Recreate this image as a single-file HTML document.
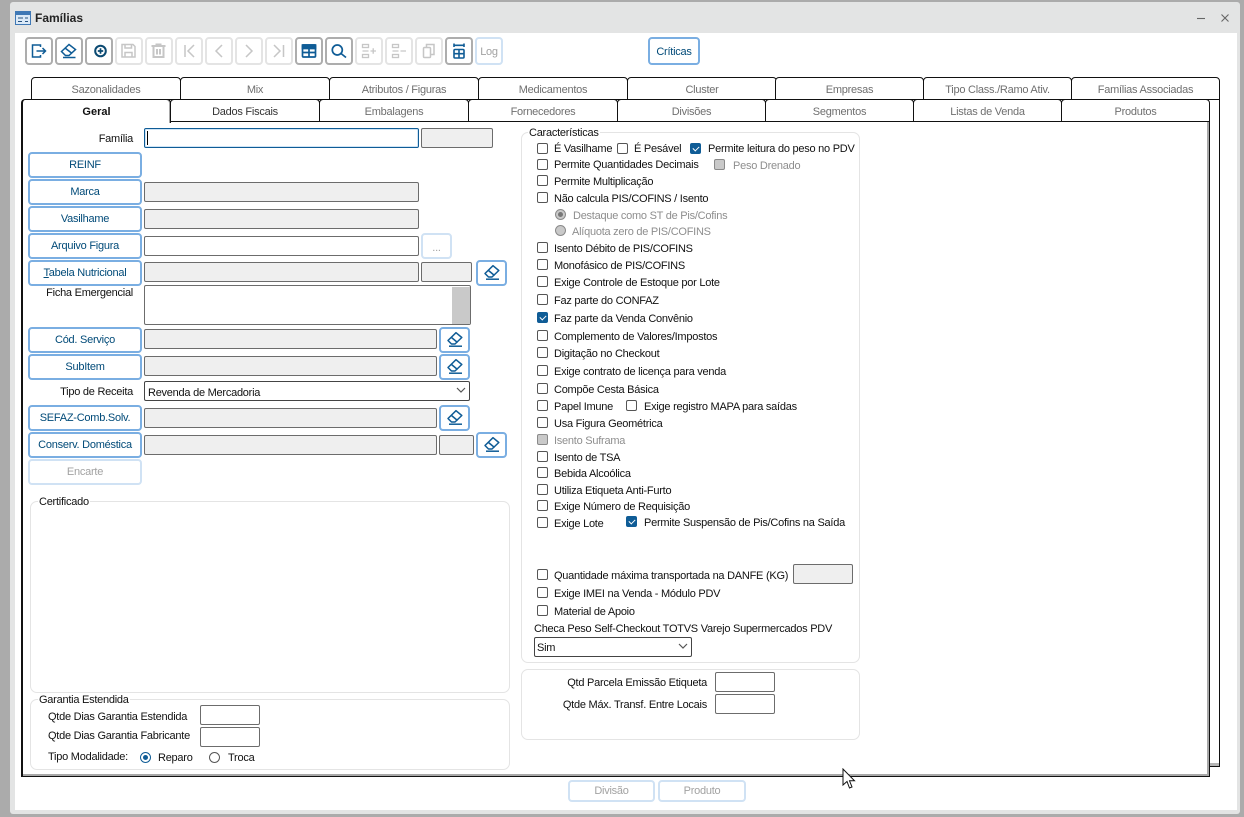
<!DOCTYPE html>
<html lang="pt"><head><meta charset="utf-8"><title>Famílias</title>
<style>
html,body{margin:0;padding:0}
body{width:1244px;height:817px;overflow:hidden;position:relative;background:#ababab;font:11px "Liberation Sans",sans-serif;letter-spacing:-.25px;color:#111}
div,span,svg{position:absolute;box-sizing:border-box}
.t{white-space:nowrap;line-height:14px;height:14px;margin-top:2px}
.r{left:0;text-align:right}
.g{color:#8e8e8e}
.b{border:2px solid #7aaee2;border-radius:4px;background:#fff;color:#004a78;text-align:center;line-height:23px;white-space:nowrap;left:28px;width:114px;height:26px}
.d{border-color:#d0e2f4;color:#a2a2a2}
.e{width:31px;height:26px;border:2px solid #7aaee2;border-radius:4px;background:#fff}
.e svg{left:4px;top:1px;width:20px;height:20px}
.i{border:1px solid #6c6c6c;border-radius:2px;background:#fff;height:20px}
.o{background:#efefef}
.f{border:1px solid #e4e4e4;border-radius:7px;background:#fff}
.l{background:#fff;padding:0 1px;line-height:13px;height:13px;white-space:nowrap;margin-top:2px}
.c{width:11px;height:11px;border:1px solid #555;border-radius:2px;background:#fff}
.k{background:#0f5c96;border-color:#0f5c96}
.k::after{content:"";position:absolute;left:2px;top:1.5px;width:5px;height:3px;border-left:1.5px solid #fff;border-bottom:1.5px solid #fff;transform:rotate(-45deg)}
.ra{width:11px;height:11px;border:1px solid #555;border-radius:50%;background:#fff}
.x{background:#c9c9c9;border-color:#8a8a8a}
.tab{border:1px solid #111;border-radius:4px 4px 0 0;background:#fff;text-align:center;color:#6f6f6f;line-height:24px;height:23px;width:150px}
.tb{width:28px;height:28px;top:37px;border:2px solid #adadad;border-radius:4px;background:#fff}
.tb svg{left:-2px;top:-2px;width:28px;height:28px;fill:none;stroke:#0f5c96;stroke-width:1.5}
.dis{border-color:#e4e4e4}
.dis svg{stroke:#c6c6c6}
</style></head><body>
<svg width="0" height="0" style="position:absolute"><defs>
<g id="er" fill="none" stroke="#0f5c96" stroke-width="1.5" stroke-linejoin="round"><path d="M3 10.500 11 2.700 16.800 7.500 10 14H6.500Z"/><path d="M6.500 7.500 12.500 12.500"/><path d="M4 16.200H17"/></g>
</defs></svg>

<div style="left:10px;top:2px;width:1230px;height:812px;background:#e3e4e4;border-radius:3px"></div>
<div style="left:15px;top:33px;width:1222px;height:777px;background:#fff"></div>

<svg style="left:15px;top:11px" width="16" height="14" viewBox="0 0 16 14"><rect x=".5" y=".5" width="15" height="13" fill="#dbe9f7" stroke="#3f78b5"/><rect x="1" y="1" width="14" height="3" fill="#3f78b5"/><path d="M3 7H8M3 10.500H7M10 7h3M10 10.500h3" stroke="#27527f" fill="none"/></svg>
<div class="t" style="left:35px;top:9px;font-weight:bold;font-size:12px;letter-spacing:0;color:#222">Famílias</div>
<svg style="left:1195px;top:12px" width="36" height="14" fill="none" stroke="#666" stroke-width="1.100"><path d="M2 6.500H10"/><path d="M26.500 2.500 33.500 9.500M33.500 2.500 26.500 9.500"/></svg>

<!-- toolbar -->
<div class="tb" style="left:25px"><svg viewBox="0 0 28 28"><path d="M15.500 10V8H7.500V20H15.500V18"/><path d="M11.500 14H20.500M17.500 11 20.500 14 17.500 17"/></svg></div>
<div class="tb" style="left:55px"><svg viewBox="0 0 28 28"><path d="M6.500 14.500 14 7.500 20.500 12.500 14 18.500H10.500Z"/><path d="M10 11 16.500 16"/><path d="M8 20.500H20.500"/></svg></div>
<div class="tb" style="left:85px"><svg viewBox="0 0 28 28" style="stroke:#0b4a72"><circle cx="15.500" cy="14" r="5.300" stroke-width="2"/><path d="M15.500 11.300v5.400M12.800 14h5.400" stroke-width="1.700"/></svg></div>
<div class="tb dis" style="left:115px"><svg viewBox="0 0 28 28"><path d="M7 7.500H18L20 9.500V20H7Z"/><path d="M10 7.500V11H16.500V7.500M10 20V15.500H17V20"/></svg></div>
<div class="tb dis" style="left:145px"><svg viewBox="0 0 28 28" style="stroke-width:2"><path d="M6.500 9H20.500M11.500 9V7.500H15.500V9M8.500 9V20H18.500V9M12 12V17.500M15 12V17.500"/></svg></div>
<div class="tb dis" style="left:175px"><svg viewBox="0 0 28 28"><path d="M10 8V20M19 8 13 14 19 20"/></svg></div>
<div class="tb dis" style="left:205px"><svg viewBox="0 0 28 28"><path d="M17 8 11 14 17 20"/></svg></div>
<div class="tb dis" style="left:235px"><svg viewBox="0 0 28 28"><path d="M11 8 17 14 11 20"/></svg></div>
<div class="tb dis" style="left:265px"><svg viewBox="0 0 28 28"><path d="M9 8 15 14 9 20M18.500 8V20"/></svg></div>
<div class="tb" style="left:295px"><svg viewBox="0 0 28 28" style="stroke-width:1.700"><rect x="7.500" y="8" width="13" height="12" rx="1"/><rect x="7.500" y="8" width="13" height="3.500" fill="#0f5c96"/><path d="M7.500 15.500h13M14 11.500v8.500"/></svg></div>
<div class="tb" style="left:325px"><svg viewBox="0 0 28 28" style="stroke-width:1.700"><circle cx="12.300" cy="13" r="5"/><path d="M16 16.500 21 20.500"/></svg></div>
<div class="tb dis" style="left:355px"><svg viewBox="0 0 28 28" style="stroke-width:1.300"><rect x="7.500" y="7.500" width="6" height="3"/><rect x="7.500" y="17.500" width="6" height="3"/><path d="M7.500 14H13.500M15.500 14H21M18.200 11.300V16.700"/></svg></div>
<div class="tb dis" style="left:385px"><svg viewBox="0 0 28 28" style="stroke-width:1.300"><rect x="7.500" y="7.500" width="6" height="3"/><rect x="7.500" y="17.500" width="6" height="3"/><path d="M7.500 14H13.500M15.500 14H21"/></svg></div>
<div class="tb dis" style="left:415px"><svg viewBox="0 0 28 28"><rect x="8.500" y="10.500" width="7" height="10" rx="1"/><path d="M11.500 10.500V7.500H19V17.500H15.500"/></svg></div>
<div class="tb" style="left:445px"><svg viewBox="0 0 28 28" style="stroke-width:1.600"><rect x="9" y="12.500" width="10" height="8.500" rx="1"/><path d="M9 16.700h10M14 12.500V21"/><path d="M9 8.300h10M9 6.500V10M19 6.500V10"/></svg></div>
<div class="b d" style="left:475px;top:37px;width:28px;height:28px;line-height:26px">Log</div>
<div class="b" style="left:648px;top:37px;width:52px;height:28px;line-height:26px">Críticas</div>

<!-- back panel -->
<div style="left:32px;top:99px;width:1188px;height:668px;background:#fff;border:1px solid #111;border-top:0;border-left:0;box-shadow:inset 0 -3px 0 #b5b5b5"></div>
<!-- back tabs -->
<div class="tab" style="left:31px;top:77px">Sazonalidades</div>
<div class="tab" style="left:180px;top:77px">Mix</div>
<div class="tab" style="left:329px;top:77px">Atributos / Figuras</div>
<div class="tab" style="left:478px;top:77px">Medicamentos</div>
<div class="tab" style="left:627px;top:77px">Cluster</div>
<div class="tab" style="left:775px;top:77px;width:149px">Empresas</div>
<div class="tab" style="left:923px;top:77px;width:149px">Tipo Class./Ramo Ativ.</div>
<div class="tab" style="left:1071px;top:77px;width:149px">Famílias Associadas</div>
<!-- front panel -->
<div style="left:21px;top:121px;width:1189px;height:656px;background:#fff;border:1px solid #111;border-left-width:2px;box-shadow:inset 0 -2px 0 #a8a8a8,inset -2px 0 0 #a8a8a8"></div>
<!-- front tabs -->
<div class="tab" style="left:170px;top:99px;color:#333">Dados Fiscais</div>
<div class="tab" style="left:319px;top:99px">Embalagens</div>
<div class="tab" style="left:468px;top:99px">Fornecedores</div>
<div class="tab" style="left:617px;top:99px;width:149px">Divisões</div>
<div class="tab" style="left:765px;top:99px;width:149px">Segmentos</div>
<div class="tab" style="left:913px;top:99px;width:149px">Listas de Venda</div>
<div class="tab" style="left:1061px;top:99px;width:149px">Produtos</div>
<div class="tab" style="left:21px;top:99px;height:24px;border-bottom:0;border-left-width:2px;color:#111;font-weight:bold;letter-spacing:0;z-index:2;box-shadow:inset -1px 0 0 #a8a8a8">Geral</div>

<!-- left form -->
<div class="t r" style="top:130px;width:133px">Família</div>
<div class="i" style="left:144px;top:128px;width:275px;border:1px solid #0f5c96;box-shadow:inset 0 0 0 1px #cfe4f5"></div>
<div style="left:147px;top:131px;width:1px;height:14px;background:#000"></div>
<div class="i o" style="left:421px;top:128px;width:72px"></div>

<div class="b" style="top:152px">REINF</div>
<div class="b" style="top:179px">Marca</div>
<div class="i o" style="left:144px;top:182px;width:275px"></div>
<div class="b" style="top:206px">Vasilhame</div>
<div class="i o" style="left:144px;top:209px;width:275px"></div>
<div class="b" style="top:233px">Arquivo Figura</div>
<div class="i" style="left:144px;top:236px;width:275px"></div>
<div class="b d" style="left:421px;top:233px;width:31px;line-height:26px">...</div>
<div class="b" style="top:260px"><u>T</u>abela Nutricional</div>
<div class="i o" style="left:144px;top:262px;width:275px"></div>
<div class="i o" style="left:421px;top:262px;width:51px"></div>
<div class="e" style="left:476px;top:260px"><svg viewBox="0 0 20 20"><use href="#er"/></svg></div>
<div class="t r" style="top:284px;width:133px">Ficha Emergencial</div>
<div class="i" style="left:144px;top:285px;width:327px;height:40px"></div>
<div style="left:452px;top:287px;width:18px;height:37px;background:#c9c9c9"></div>

<div class="b" style="top:327px">Cód. Serviço</div>
<div class="i o" style="left:144px;top:329px;width:293px"></div>
<div class="e" style="left:439px;top:327px"><svg viewBox="0 0 20 20"><use href="#er"/></svg></div>
<div class="b" style="top:354px">SubItem</div>
<div class="i o" style="left:144px;top:356px;width:293px"></div>
<div class="e" style="left:439px;top:354px"><svg viewBox="0 0 20 20"><use href="#er"/></svg></div>
<div class="t r" style="top:383px;width:133px">Tipo de Receita</div>
<div class="i" style="left:144px;top:381px;width:326px;border-color:#444"></div>
<div class="t" style="left:148px;top:384px">Revenda de Mercadoria</div>
<svg style="left:456px;top:387px" width="10" height="7" fill="none" stroke="#555" stroke-width="1.200"><path d="M1 1 5 5 9 1"/></svg>
<div class="b" style="top:405px">SEFAZ-Comb.Solv.</div>
<div class="i o" style="left:144px;top:408px;width:293px"></div>
<div class="e" style="left:439px;top:405px"><svg viewBox="0 0 20 20"><use href="#er"/></svg></div>
<div class="b" style="top:432px">Conserv. Doméstica</div>
<div class="i o" style="left:144px;top:435px;width:293px"></div>
<div class="i o" style="left:439px;top:435px;width:35px"></div>
<div class="e" style="left:476px;top:432px"><svg viewBox="0 0 20 20"><use href="#er"/></svg></div>
<div class="b d" style="top:459px">Encarte</div>

<!-- Certificado -->
<div class="f" style="left:30px;top:501px;width:480px;height:192px"></div>
<div class="l" style="left:38px;top:494px">Certificado</div>
<!-- Garantia -->
<div class="f" style="left:30px;top:699px;width:480px;height:71px"></div>
<div class="l" style="left:38px;top:692px">Garantia Estendida</div>
<div class="t" style="left:48px;top:708px">Qtde Dias Garantia Estendida</div>
<div class="i" style="left:200px;top:705px;width:60px"></div>
<div class="t" style="left:48px;top:727px">Qtde Dias Garantia Fabricante</div>
<div class="i" style="left:200px;top:727px;width:60px"></div>
<div class="t" style="left:48px;top:748px">Tipo Modalidade:</div>
<div class="ra" style="left:140px;top:752px;border-color:#0f5c96"></div>
<div style="left:143px;top:755px;width:5px;height:5px;border-radius:50%;background:#0f5c96"></div>
<div class="t" style="left:158px;top:749px">Reparo</div>
<div class="ra" style="left:209px;top:752px"></div>
<div class="t" style="left:228px;top:749px">Troca</div>

<!-- Caracteristicas -->
<div class="f" style="left:521px;top:132px;width:339px;height:531px"></div>
<div class="l" style="left:528px;top:125px">Características</div>

<div class="c" style="left:537px;top:143px"></div><div class="t" style="left:554px;top:140px">É Vasilhame</div>
<div class="c" style="left:617px;top:143px"></div><div class="t" style="left:634px;top:140px">É Pesável</div>
<div class="c k" style="left:690px;top:143px"></div><div class="t" style="left:708px;top:140px">Permite leitura do peso no PDV</div>
<div class="c" style="left:537px;top:159px"></div><div class="t" style="left:554px;top:156px">Permite Quantidades Decimais</div>
<div class="c x" style="left:714px;top:159px"></div><div class="t g" style="left:733px;top:157px">Peso Drenado</div>
<div class="c" style="left:537px;top:175px"></div><div class="t" style="left:554px;top:173px">Permite Multiplicação</div>
<div class="c" style="left:537px;top:192px"></div><div class="t" style="left:554px;top:190px">Não calcula PIS/COFINS / Isento</div>
<div class="ra x" style="left:555px;top:209px"></div><div style="left:558px;top:212px;width:5px;height:5px;border-radius:50%;background:#777"></div>
<div class="t g" style="left:573px;top:207px;width:158px;overflow:hidden">Destaque como ST de Pis/Cofins</div>
<div class="ra x" style="left:555px;top:225px"></div><div class="t g" style="left:572px;top:223px">Alíquota zero de PIS/COFINS</div>
<div class="c" style="left:537px;top:242px"></div><div class="t" style="left:554px;top:240px">Isento Débito de PIS/COFINS</div>
<div class="c" style="left:537px;top:259px"></div><div class="t" style="left:554px;top:257px">Monofásico de PIS/COFINS</div>
<div class="c" style="left:537px;top:276px"></div><div class="t" style="left:554px;top:274px">Exige Controle de Estoque por Lote</div>
<div class="c" style="left:537px;top:294px"></div><div class="t" style="left:554px;top:292px">Faz parte do CONFAZ</div>
<div class="c k" style="left:537px;top:312px"></div><div class="t" style="left:554px;top:310px">Faz parte da Venda Convênio</div>
<div class="c" style="left:537px;top:330px"></div><div class="t" style="left:554px;top:328px">Complemento de Valores/Impostos</div>
<div class="c" style="left:537px;top:347px"></div><div class="t" style="left:554px;top:345px">Digitação no Checkout</div>
<div class="c" style="left:537px;top:365px"></div><div class="t" style="left:554px;top:363px">Exige contrato de licença para venda</div>
<div class="c" style="left:537px;top:383px"></div><div class="t" style="left:554px;top:381px">Compõe Cesta Básica</div>
<div class="c" style="left:537px;top:400px"></div><div class="t" style="left:554px;top:398px">Papel Imune</div>
<div class="c" style="left:626px;top:400px"></div><div class="t" style="left:644px;top:398px">Exige registro MAPA para saídas</div>
<div class="c" style="left:537px;top:417px"></div><div class="t" style="left:554px;top:415px">Usa Figura Geométrica</div>
<div class="c x" style="left:537px;top:434px"></div><div class="t g" style="left:554px;top:432px">Isento Suframa</div>
<div class="c" style="left:537px;top:451px"></div><div class="t" style="left:554px;top:449px">Isento de TSA</div>
<div class="c" style="left:537px;top:467px"></div><div class="t" style="left:554px;top:465px">Bebida Alcoólica</div>
<div class="c" style="left:537px;top:484px"></div><div class="t" style="left:554px;top:482px">Utiliza Etiqueta Anti-Furto</div>
<div class="c" style="left:537px;top:500px"></div><div class="t" style="left:554px;top:498px;width:137px;overflow:hidden">Exige Número de Requisição</div>
<div class="c" style="left:537px;top:517px"></div><div class="t" style="left:554px;top:515px">Exige Lote</div>
<div class="c k" style="left:626px;top:516px"></div><div class="t" style="left:644px;top:514px">Permite Suspensão de Pis/Cofins na Saída</div>

<div class="c" style="left:537px;top:569px"></div><div class="t" style="left:554px;top:567px">Quantidade máxima transportada na DANFE (KG)</div>
<div class="i o" style="left:793px;top:564px;width:60px"></div>
<div class="c" style="left:537px;top:587px"></div><div class="t" style="left:554px;top:585px">Exige IMEI na Venda - Módulo PDV</div>
<div class="c" style="left:537px;top:605px"></div><div class="t" style="left:554px;top:603px">Material de Apoio</div>
<div class="t" style="left:534px;top:620px">Checa Peso Self-Checkout TOTVS Varejo Supermercados PDV</div>
<div class="i" style="left:534px;top:637px;width:158px;border-color:#444"></div>
<div class="t" style="left:537px;top:639px">Sim</div>
<svg style="left:678px;top:643px" width="10" height="7" fill="none" stroke="#555" stroke-width="1.200"><path d="M1 1 5 5 9 1"/></svg>

<div class="f" style="left:521px;top:669px;width:339px;height:71px"></div>
<div class="t r" style="top:674px;width:707px">Qtd Parcela Emissão Etiqueta</div>
<div class="i" style="left:715px;top:672px;width:60px"></div>
<div class="t r" style="top:696px;width:707px">Qtde Máx. Transf. Entre Locais</div>
<div class="i" style="left:715px;top:694px;width:60px"></div>

<div class="b d" style="left:568px;top:780px;width:87px;height:22px;line-height:18px">Divisão</div>
<div class="b d" style="left:658px;top:780px;width:88px;height:22px;line-height:18px">Produto</div>

<svg style="left:842px;top:768px;z-index:5" width="14" height="22" viewBox="0 0 14 22"><path d="M1 1V17L5 13.500 7.500 20 10 19 7.500 12.800H12.500Z" fill="#fff" stroke="#111"/></svg>
</body></html>
